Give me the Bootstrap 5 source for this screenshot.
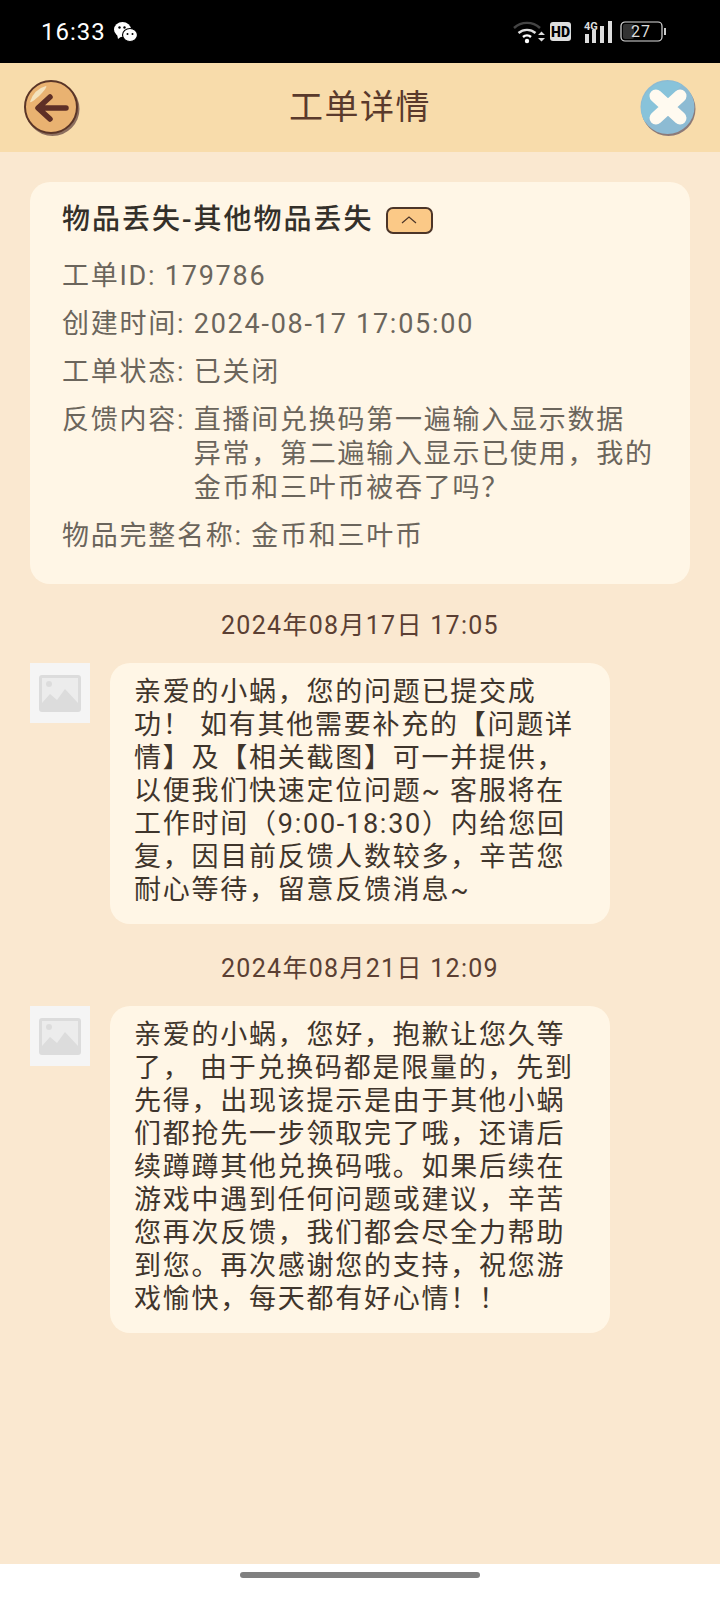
<!DOCTYPE html>
<html lang="zh"><head><meta charset="utf-8">
<link rel="stylesheet" href="https://cdn.jsdelivr.net/npm/bootstrap@5.3.0/dist/css/bootstrap.min.css">
<style>
html,body{height:100%}
body{font-family:Roboto,"Noto Sans CJK SC",sans-serif;background:#fff;color:#3f352c}
.screen{width:720px;height:1612px}
.sbar{height:64px;background:#000;color:#fff;padding:0 52px 0 41px}
.sbar-time{font-size:24px;letter-spacing:1px;line-height:1}
.hdr{height:90px;background:#f8dcab;padding:0 24px}
.hdr-title{font-size:34px;color:#5a3a2c;letter-spacing:1.5px;font-weight:400;margin:0}
.main{background:#fae8d0;height:1427px;padding:30px 30px 0}
.info{background:#fff6e6;border-radius:20px;padding:18px 32px 14px;height:402px;margin-bottom:26px}
.info-h{font-size:28px;font-weight:500;color:#34302a;letter-spacing:2px;line-height:40px;margin:0 0 19px}
.tog{width:47px;height:27px;border:2px solid #4c3528;border-radius:7px;background:#fbc987;margin-left:12px}
.ln{font-size:27px;color:#6b655c;letter-spacing:1.75px;line-height:34px;margin-bottom:14px}
.ln-w{width:520px;display:block;text-indent:0}
.stamp{font-size:25px;color:#5b3f33;letter-spacing:1.3px;text-align:center;line-height:32px;margin-bottom:21px}
.ava{width:60px;height:60px;background:#f5f5f5;flex:none}
.bub{background:#fff6e6;border-radius:20px;width:500px;margin-left:20px;padding:13px 24px 17px;font-size:27px;line-height:33px;letter-spacing:1.75px;color:#3f352c}
.msg{margin-bottom:29px}
.nav-h{height:49px;background:#fff}
.nav-b{width:240px;height:6px;border-radius:3px;background:#808080}
</style></head><body>
<div class="screen d-flex flex-column">
<div class="sbar d-flex align-items-center justify-content-between">
 <div class="d-flex align-items-center gap-2"><span class="sbar-time">16:33</span>
 <svg width="24" height="22" viewBox="0 0 24 22" fill="#fff"><ellipse cx="8.5" cy="8.5" rx="8.5" ry="7.5"/><path d="M3 13l1 5 4-3z"/><ellipse cx="16" cy="14" rx="7.5" ry="6.5" stroke="#000" stroke-width="1.2"/><circle cx="5.5" cy="6.5" r="1.2" fill="#000"/><circle cx="10.5" cy="6.5" r="1.2" fill="#000"/><circle cx="13.5" cy="13" r="1" fill="#000"/><circle cx="18.5" cy="13" r="1" fill="#000"/></svg></div>
 <svg width="156" height="26" viewBox="0 0 156 26" class="flex-none">
  <path d="M2 9a19 19 0 0 1 26 0" fill="none" stroke="#444" stroke-width="2.4"/>
  <path d="M6.5 14a13 13 0 0 1 17 0" fill="none" stroke="#ddd" stroke-width="2.4"/>
  <path d="M11 18a6 6 0 0 1 8 0" fill="none" stroke="#fff" stroke-width="2.4"/>
  <circle cx="15" cy="22" r="2.2" fill="#fff"/>
  <path d="M26 16l3.5-3.5 3.5 3.5zM26 19h7l-3.5 3.5z" fill="#ddd"/>
  <rect x="38" y="3" width="21" height="19" rx="3" fill="#ddd"/>
  <text x="48.500" y="18" text-anchor="middle" font-family="Roboto" font-weight="900" font-size="14" fill="#000">HD</text>
  <text x="72" y="11" font-family="Roboto" font-weight="700" font-size="11" fill="#ddd">4G</text>
  <rect x="73" y="15" width="4" height="9" fill="#ddd"/><rect x="80" y="11" width="4" height="13" fill="#ddd"/><rect x="88" y="7" width="4" height="17" fill="#ddd"/><rect x="96" y="2" width="4" height="22" fill="#ddd"/>
  <rect x="109" y="3" width="41" height="19" rx="4" fill="none" stroke="#ddd" stroke-width="1.2"/>
  <rect x="111" y="5" width="11" height="15" rx="2" fill="#333"/>
  <rect x="152" y="9" width="2" height="7" fill="#ccc"/>
  <text x="129" y="18" text-anchor="middle" font-family="Roboto" font-size="16" letter-spacing="1" fill="#ddd">27</text>
 </svg>
</div>
<div class="hdr d-flex align-items-center justify-content-between">
 <svg width="56" height="56" viewBox="0 0 56 56">
  <circle cx="28.500" cy="29" r="27" fill="#8d6f5f"/>
  <circle cx="27" cy="27" r="26" fill="#e9b271" stroke="#5a3527" stroke-width="2"/>
  <path d="M6 22a22 22 0 0 1 16-16c3 1-14 18-16 16z" fill="#f4e2bd"/>
  <path d="M42 28H16M26 17L14 28l12 11" fill="none" stroke="#5e2f26" stroke-width="5.500" stroke-linecap="round" stroke-linejoin="round"/>
 </svg>
 <h1 class="hdr-title">工单详情</h1>
 <svg width="56" height="56" viewBox="0 0 56 56">
  <circle cx="28.500" cy="29" r="27" fill="#8c7a78"/>
  <circle cx="27.500" cy="27" r="27" fill="#8dbbd3"/>
  <path d="M5 42L42 5a27 27 0 0 0-37 37z" fill="#88c3da"/>
  <path d="M16 16l24 22M40 16L16 38" stroke="#fffaf0" stroke-width="13" stroke-linecap="round"/>
 </svg>
</div>
<div class="main flex-grow-1">
 <section class="info">
  <div class="info-h d-flex align-items-center">物品丢失-其他物品丢失<span class="tog d-flex align-items-center justify-content-center"><svg width="18" height="10" viewBox="0 0 18 10"><path d="M2 8l7-6 7 6" fill="none" stroke="#4c3528" stroke-width="1.200"/></svg></span></div>
  <div class="ln">工单ID: 179786</div>
  <div class="ln">创建时间: 2024-08-17 17:05:00</div>
  <div class="ln">工单状态: 已关闭</div>
  <div class="ln d-flex"><span class="text-nowrap">反馈内容:&nbsp;</span><span>直播间兑换码第一遍输入显示数据<br><span class="lft">异常，第二遍输入显示已使用，我的</span><br><span>金币和三叶币被吞了吗？</span></span></div>
  <div class="ln">物品完整名称: 金币和三叶币</div>
 </section>
 <div class="stamp">2024年08月17日 17:05</div>
 <div class="d-flex align-items-start msg">
  <div class="ava d-flex align-items-center justify-content-center"><svg width="42" height="37" viewBox="0 0 42 37"><rect width="42" height="37" rx="3" fill="#dcdcdc"/><rect x="3" y="3" width="36" height="31" fill="#ececec"/><circle cx="10" cy="9" r="3" fill="#dcdcdc"/><path d="M3 34V28l8-9 7 6 8-11 13 14v6z" fill="#dcdcdc"/></svg></div>
  <div class="bub">亲爱的小蜗，您的问题已提交成功！ 如有其他需要补充的【问题详情】及【相关截图】可一并提供，以便我们快速定位问题~ 客服将在工作时间（9:00-18:30）内给您回复，因目前反馈人数较多，辛苦您耐心等待，留意反馈消息~</div>
 </div>
 <div class="stamp">2024年08月21日 12:09</div>
 <div class="d-flex align-items-start msg">
  <div class="ava d-flex align-items-center justify-content-center"><svg width="42" height="37" viewBox="0 0 42 37"><rect width="42" height="37" rx="3" fill="#dcdcdc"/><rect x="3" y="3" width="36" height="31" fill="#ececec"/><circle cx="10" cy="9" r="3" fill="#dcdcdc"/><path d="M3 34V28l8-9 7 6 8-11 13 14v6z" fill="#dcdcdc"/></svg></div>
  <div class="bub">亲爱的小蜗，您好，抱歉让您久等了， 由于兑换码都是限量的，先到先得，出现该提示是由于其他小蜗们都抢先一步领取完了哦，还请后续蹲蹲其他兑换码哦。如果后续在游戏中遇到任何问题或建议，辛苦您再次反馈，我们都会尽全力帮助到您。再次感谢您的支持，祝您游戏愉快，每天都有好心情！！</div>
 </div>
</div>
<div class="nav-h d-flex justify-content-center"><div class="nav-b mt-2"></div></div>
</div>
<script src="https://cdn.jsdelivr.net/npm/bootstrap@5.3.0/dist/js/bootstrap.bundle.min.js"></script>
</body></html>
